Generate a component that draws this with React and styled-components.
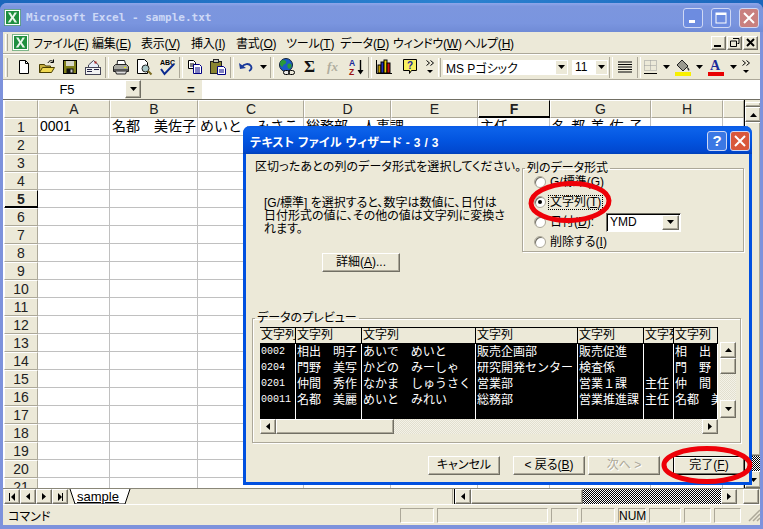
import React from 'react';
import styled, { createGlobalStyle, css } from 'styled-components';

const JP = `"Liberation Sans", "Noto Sans CJK JP", sans-serif`;
const face = '#ece9d8';
const shade = '#aca899';

const Global = createGlobalStyle`
  html, body { margin: 0; padding: 0; background: #1e6cc0; }
  * { box-sizing: border-box; }
  body { font-family: ${JP}; font-size: 12px; color: #000; font-feature-settings: "palt"; }
`;

const raised = css`
  background: ${face};
  border: 1px solid;
  border-color: #fff #716f64 #716f64 #fff;
  box-shadow: inset -1px -1px 0 ${shade};
`;
const etched = css`
  border: 1px solid ${shade};
  box-shadow: 1px 1px 0 #fff, inset 1px 1px 0 #fff;
`;

const Page = styled.div`
  position: relative;
  width: 763px;
  height: 529px;
  overflow: hidden;
  padding-top: 3px;
  background: linear-gradient(90deg, #1a66bc, #2b82d0 60%, #1a66bc);
`;
const Window = styled.div`
  width: 763px;
  height: 526px;
  display: flex;
  flex-direction: column;
  border-radius: 7px 7px 0 0;
  background: #7d92dc;
  padding: 0 3px 4px;
`;
const TitleBar = styled.div`
  height: 29px;
  margin: 0 -3px;
  padding: 0 4px 0 4px;
  display: flex;
  align-items: center;
  gap: 5px;
  border-radius: 7px 7px 0 0;
  background: linear-gradient(180deg, #8ea6ea 0, #7c96de 12%, #7a95df 70%, #708bd6 100%);
`;
const TitleText = styled.div`
  flex: 1;
  font: bold 11px "DejaVu Sans Mono", "Liberation Mono", monospace;
  color: #cdd8f6;
  letter-spacing: 0;
`;
const CaptionButton = styled.div`
  width: 20px;
  height: 20px;
  margin-left: ${p => p.$gap || 3}px;
  border: 1px solid #cfd8f4;
  border-radius: 3px;
  display: flex;
  align-items: center;
  justify-content: center;
  background: ${p => p.$tone === 'close' ? '#c9807f' : p.$tone === 'help' ? '#3b78e4' : '#6d8ce0'};
  &.active { background: #d9583a; }
`;
const MenuBar = styled.div`
  height: 22px;
  background: ${face};
  display: flex;
  align-items: center;
  padding-left: 2px;
  border-bottom: 1px solid ${shade};
`;
const Grip = styled.div`
  width: 3px;
  height: ${p => p.$h || 17}px;
  margin-right: ${p => p.$mr || 4}px;
  border-left: 1px solid #fff;
  border-right: 1px solid ${shade};
  background: ${face};
`;
const MenuIcon = styled.div`
  width: 17px;
  height: 17px;
  margin-right: 3px;
`;
const MenuItem = styled.div`
  width: ${p => p.$w}px;
  flex: none;
  font-size: 12px;
  white-space: nowrap;
  padding-left: 1px;
  letter-spacing: -0.2px;
`;
const MdiGroup = styled.div`
  margin-left: auto;
  display: flex;
  gap: 1px;
  padding-right: 2px;
`;
const MdiButton = styled.div`
  ${raised};
  width: 15px;
  height: 14px;
  display: flex;
  align-items: center;
  justify-content: center;
`;
const ToolBar = styled.div`
  height: 26px;
  background: ${face};
  display: flex;
  align-items: center;
  padding-left: 2px;
  border-bottom: 1px solid ${shade};
  border-top: 1px solid #fff;
`;
const Tool = styled.div`
  width: ${p => p.$w || 23}px;
  margin-left: ${p => p.$ml || 0}px;
  height: 22px;
  flex: none;
  display: flex;
  align-items: center;
  justify-content: center;
`;
const Sep = styled.div`
  width: ${p => p.$w || 5}px;
  flex: none;
  height: 21px;
  display: flex;
  justify-content: center;
  &::before { content: ''; width: 2px; border-left: 1px solid ${shade}; border-right: 1px solid #fff; }
`;
const Combo = styled.div`
  width: ${p => p.$w}px;
  margin-left: ${p => p.$ml || 0}px;
  height: 15px;
  flex: none;
  background: #fff;
  display: flex;
  align-items: center;
  padding-left: 3px;
  font-size: 12px;
  position: relative;
  white-space: nowrap;
`;
const ComboText = styled.span`
  flex: 1;
`;
const ComboArrow = styled.span`
  width: 11px;
  height: 13px;
  margin-right: 1px;
  background: ${face};
  display: flex;
  align-items: center;
  justify-content: center;
`;
const FormulaBar = styled.div`
  height: 20px;
  display: flex;
  background: ${face};
  border-bottom: 1px solid #716f64;
`;
const NameBox = styled.div`
  width: 122px;
  background: #fff;
  text-align: center;
  font-size: 13px;
  line-height: 19px;
  padding-left: 6px;
`;
const NameDrop = styled.div`
  ${raised};
  width: 16px;
  height: 18px;
  margin-top: 0;
  display: flex;
  align-items: center;
  justify-content: center;
`;
const EqualCell = styled.div`
  width: 59px;
  margin-left: 2px;
  padding-left: 44px;
  font: bold 13px/19px "Liberation Sans", sans-serif;
`;
const FormulaInput = styled.div`
  flex: 1;
  background: #fff;
`;
const Sheet = styled.div`
  height: 388px;
  display: flex;
  background: #fff;
  overflow: hidden;
`;
const Grid = styled.div`
  flex: none;
  width: 741px;
  padding-left: 1px;
  background: #fff;
  display: grid;
  grid-template-columns: 34px 72px 88px 106px 87px 87px 72px 101px 72px 1fr;
  grid-auto-rows: 18px;
`;
const HeadCell = styled.div`
  background: ${face};
  border: 1px solid;
  border-color: #fff ${p => p.$active ? '#000' : shade} ${p => p.$active ? '#000' : shade} #fff;
  ${p => p.$active && css`border-right-width: 1px; box-shadow: inset 0 -1px 0 #000;`}
  font-size: 14px;
  font-weight: ${p => p.$active ? 'bold' : 'normal'};
  line-height: 16px;
  text-align: center;
  color: #222;
`;
const Cell = styled.div`
  border-right: 1px solid #c0c0c0;
  border-bottom: 1px solid #c0c0c0;
  padding: 0 2px;
  font-size: ${p => p.$fs || 14}px;
  line-height: 17px;
  letter-spacing: ${p => p.$ls || 0}px;
  font-feature-settings: normal;
  white-space: nowrap;
`;
const VScroll = styled.div`
  flex: 1;
  padding-top: 2px;
  background: ${face};
  border-left: 1px solid #000;
  display: flex;
  flex-direction: column;
`;
const SplitBox = styled.div`
  height: 5px;
  ${raised};
`;
const ScrollBtn = styled.div`
  ${raised};
  flex: none;
  width: ${p => p.$w || 16}px;
  height: ${p => p.$h || 16}px;
  display: flex;
  align-items: center;
  justify-content: center;
`;
const ScrollThumb = styled.div`
  ${raised};
  flex: ${p => p.$grow || 'none'};
  width: ${p => p.$w ? p.$w + 'px' : 'auto'};
  height: ${p => p.$h ? p.$h + 'px' : 'auto'};
`;
const Checker = styled.div`
  flex: ${p => p.$grow || 1};
  height: ${p => p.$h ? p.$h + 'px' : 'auto'};
  background: repeating-conic-gradient(${p => p.$light ? '#f4f2e8' : '#000'} 0 25%, ${p => p.$light ? '#e2dfcf' : '#fff'} 0 50%) 0 0 / 2px 2px;
`;
const TabBar = styled.div`
  height: 17px;
  display: flex;
  align-items: center;
  background: ${face};
  border-top: 1px solid #8a8778;
  border-bottom: 1px solid #fff;
  padding-left: 1px;
`;
const TabNav = styled.div`
  width: 16px;
  height: 15px;
  ${raised};
  display: flex;
  align-items: center;
  justify-content: center;
`;
const Tab = styled.div`
  position: relative;
  width: 62px;
  height: 15px;
  margin-left: 1px;
  font-size: 13px;
  line-height: 15px;
  padding-left: 8px;
  text-decoration: underline;
  flex: none;
`;
const TabShape = styled.svg`
  position: absolute;
  left: 0;
  top: 0;
`;
const TabFill = styled.div`
  flex: none;
  width: 321px;
`;
const Splitter = styled.div`
  flex: none;
  width: 3px;
  height: 15px;
  border-left: 1px solid ${shade};
  border-right: 1px solid #000;
`;
const TabCorner = styled.div`
  flex: none;
  ${raised};
  width: 16px;
  height: 15px;
  margin-left: 6px;
`;
const StatusBar = styled.div`
  height: 20px;
  background: ${face};
  display: flex;
  align-items: center;
  gap: 3px;
  position: relative;
`;
const StatusLabel = styled.div`
  width: 386px;
  flex: none;
  padding-left: 5px;
  font-size: 12px;
`;
const Pane = styled.div`
  width: ${p => p.$w}px;
  flex: none;
  height: 15px;
  margin-left: ${p => p.$ml || 0}px;
  ${etched};
  box-shadow: none;
  border-color: ${shade} #fff #fff ${shade};
  outline: 0;
  text-align: center;
  font-size: 12px;
  line-height: 14px;
`;
const Resize = styled.svg`
  flex: none;
  margin-left: 3px;
`;

/* dialog */
const Dialog = styled.div`
  position: absolute;
  left: 243px;
  top: 126px;
  width: 509px;
  height: 359px;
  border: 3px solid #0050e0;
  border-top: 0;
  border-radius: 7px 7px 0 0;
  background: ${face};
  display: flex;
  flex-direction: column;
`;
const DialogTitle = styled.div`
  height: 28px;
  margin: 0 -3px;
  padding: 2px 2px 0 7px;
  display: flex;
  align-items: center;
  border-radius: 7px 7px 0 0;
  background: linear-gradient(180deg, #0a5ae6 0, #0c62ea 10%, #0355e0 50%, #0148d0 90%, #0040b8 100%);
`;
const DialogTitleText = styled.div`
  flex: 1;
  font-weight: bold;
  font-size: 12px;
  color: #fff;
  letter-spacing: 0.3px;
  white-space: nowrap;
`;
const TopRow = styled.div`
  display: flex;
  height: 98px;
  margin-top: 7px;
  padding: 0 5px 0 9px;
  justify-content: space-between;
`;
const LeftColumn = styled.div`
  width: 260px;
  display: flex;
  flex-direction: column;
  align-items: flex-start;
`;
const Lead = styled.div`
  font-size: 12px;
  line-height: 13px;
  white-space: nowrap;
  letter-spacing: 0.1px;
`;
const Para = styled.div`
  width: 242px;
  margin: 23px 0 0 9px;
  font-size: 12px;
  line-height: 13px;
`;
const Button = styled.div`
  ${raised};
  width: ${p => p.$w || 72}px;
  height: ${p => p.$h || 19}px;
  flex: none;
  margin: ${p => p.$m || 0};
  text-align: center;
  font-size: 12px;
  line-height: 17px;
  color: ${p => p.$disabled ? shade : '#000'};
  text-shadow: ${p => p.$disabled ? '1px 1px 0 #fff' : 'none'};
  ${p => p.$def && css`border: 1px solid #000; box-shadow: inset -1px -1px 0 #716f64, inset 1px 1px 0 #fff;`}
`;
const Group = styled.fieldset`
  margin: ${p => p.$m || 0};
  padding: ${p => p.$p || 0};
  width: ${p => p.$w}px;
  height: ${p => p.$h}px;
  flex: none;
  min-width: 0;
  ${etched};
`;
const GroupLegend = styled.legend`
  margin-left: 2px;
  padding: 0 2px;
  font-size: 12px;
  line-height: 14px;
`;
const RadioList = styled.div`
  display: flex;
  flex-direction: column;
  gap: 6px;
  padding-left: 11px;
`;
const RadioRow = styled.div`
  height: 14px;
  display: flex;
  align-items: center;
  gap: 3px;
  font-size: 12px;
  white-space: nowrap;
`;
const RadioDot = styled.span`
  width: 12px;
  height: 12px;
  flex: none;
  border-radius: 50%;
  background: #fff;
  border: 1px solid ${shade};
  box-shadow: inset 1px 1px 0 #716f64;
  display: flex;
  align-items: center;
  justify-content: center;
  &::after { content: ''; width: 4px; height: 4px; border-radius: 50%; background: ${p => p.$on ? '#000' : 'transparent'}; }
`;
const RadioLabel = styled.span`
  outline: ${p => p.$focus ? '1px dotted #000' : '0'};
  padding: 0 1px;
  line-height: 13px;
`;
const DateSelect = styled.div`
  width: 75px;
  height: 19px;
  margin-left: 8px;
  background: #fff;
  border: 1px solid;
  border-color: #716f64 #fff #fff #716f64;
  box-shadow: inset 1px 1px 0 #000;
  display: flex;
  align-items: center;
  padding: 0 1px 0 3px;
  font-size: 12px;
`;
const DateArrow = styled.span`
  ${raised};
  width: 17px;
  height: 15px;
  display: flex;
  align-items: center;
  justify-content: center;
`;
const PreviewRow = styled.div`
  display: flex;
  padding: 2px 0 0 7px;
`;
const PreviewPane = styled.div`
  width: 458px;
  flex: none;
`;
const PreviewTable = styled.div`
  display: grid;
  grid-template-columns: 36px 66px 114px 102px 66px 30px 44px;
  background: #000;
  height: 92px;
  border-top: 1px solid #000;
`;
const PreviewCol = styled.div`
  display: flex;
  flex-direction: column;
  overflow: hidden;
`;
const PreviewHead = styled.div`
  height: 16px;
  flex: none;
  background: ${face};
  border-right: 1px solid #000;
  border-bottom: 1px solid #000;
  font-size: 12px;
  line-height: 15px;
  font-feature-settings: normal;
  white-space: nowrap;
  padding-left: 1px;
`;
const PreviewBody = styled.div`
  flex: 1;
  background: #000;
  color: #fff;
  border-right: 1px solid #fff;
  padding-left: 1px;
  white-space: nowrap;
  font-feature-settings: normal;
`;
const PreviewLine = styled.div`
  height: 16px;
  font-size: ${p => p.$num ? 10 : 12}px;
  line-height: 16px;
  font-family: ${p => p.$num ? '"Liberation Mono", monospace' : JP};
`;
const HScroll = styled.div`
  display: flex;
  height: 15px;
  background: ${face};
`;
const SideScroll = styled.div`
  width: 16px;
  height: 76px;
  margin: 15px 0 0 2px;
  flex: none;
  display: flex;
  flex-direction: column;
`;
const DialogActions = styled.div`
  display: flex;
  justify-content: flex-end;
  padding-right: 4px;
  margin-top: 13px;
`;
const Annotation = styled.svg`
  position: absolute;
  left: 0;
  top: 0;
  pointer-events: none;
`;

/* icons */
const Ar = ({ d = 'down', s = '#000' }) => {
  const pts = { down: '0,0 7,0 3.5,4', up: '0,4 7,4 3.5,0', left: '4,0 4,7 0,3.5', right: '0,0 0,7 4,3.5' }[d];
  const v = d === 'down' || d === 'up' ? [7, 4] : [4, 7];
  return <svg width={v[0]} height={v[1]} viewBox={`0 0 ${v[0]} ${v[1]}`}><polygon points={pts} fill={s} /></svg>;
};
const Ico = ({ children }) => <svg width="18" height="18" viewBox="0 0 18 18">{children}</svg>;
const ExcelIcon = ({ size = 17 }) => (
  <svg width={size} height={size} viewBox="0 0 17 17">
    <rect x=".5" y=".5" width="16" height="16" fill="#fff" stroke="#0a7a2a" strokeDasharray="1 1" />
    <rect x="2" y="2" width="13" height="13" fill="#1e8f3e" />
    <path d="M4 3.5h2.5L8.5 7l2-3.500H13L9.800 8.500 13.200 13.500H10.600L8.500 10l-2.200 3.500H3.800L7.200 8.500z" fill="#e8f5ea" />
  </svg>
);
const NewIcon = () => <Ico><path d="M4.500 2.500h6l3 3v10h-9z" fill="#fff" stroke="#000" /><path d="M10.500 2.500v3h3" fill="none" stroke="#000" /></Ico>;
const OpenIcon = () => <Ico><path d="M1.500 6.500h5l1 1.500h5v6.500h-11z" fill="#c8b040" stroke="#4a3f00" /><path d="M1.500 14.500l3-5h12l-3 5z" fill="#f0d850" stroke="#4a3f00" /><path d="M10 5c1-2.500 3.500-3 5-1.500" fill="none" stroke="#000" /><path d="M15.500 1.500v3h-3" fill="none" stroke="#000" /></Ico>;
const SaveIcon = () => <Ico><rect x="2.500" y="2.500" width="13" height="13" fill="#80801a" stroke="#000" /><rect x="5" y="3" width="8" height="5" fill="#d8d8c8" /><rect x="5.500" y="10.500" width="7" height="5" fill="#111" /><rect x="9.500" y="11.500" width="2" height="3" fill="#c8c8c8" /></Ico>;
const MailIcon = () => <Ico><path d="M4.500 7L9.500 2.500 14.500 7v3h-10z" fill="#e8eef8" stroke="#445" /><rect x="10.500" y="3.500" width="2" height="2" fill="#b02020" /><rect x="1.500" y="9.500" width="15" height="7" fill="#f2f2f2" stroke="#445" /><path d="M3 11.500h5M3 13.500h5M10 11.500h5" stroke="#224" /></Ico>;
const PrintIcon = () => <Ico><path d="M5.500 2.500h7l1.500 5h-9z" fill="#fff" stroke="#222" /><path d="M1.500 8.500l2-2h11l2 2v5h-15z" fill="#a8a8a0" stroke="#222" /><rect x="2" y="11" width="14" height="2" fill="#555" /><rect x="12" y="9" width="2" height="1" fill="#e8e800" /><path d="M3.500 13.500l1 2.500h9l1-2.500" fill="#ddd" stroke="#222" /></Ico>;
const PreviewIcon = () => <Ico><path d="M2.500 1.500h7l3 3v11h-10z" fill="#fff" stroke="#000" /><circle cx="10.500" cy="10.500" r="3.500" fill="#a8c8c8" stroke="#222" /><path d="M13 13l3.500 3.500" stroke="#7a6a20" strokeWidth="2" /></Ico>;
const SpellIcon = () => <Ico><text x="2" y="7" fontSize="7" fontFamily="Liberation Sans" fontWeight="bold" fill="#000">ABC</text><path d="M3 11l3.500 5L16 6" fill="none" stroke="#0a2a90" strokeWidth="2" /></Ico>;
const CopyIcon = () => <Ico><path d="M2.500 2.500h5l2 2v6h-7z" fill="#fff" stroke="#000" /><path d="M7.500 6.500h6l2 2v7h-8z" fill="#fff" stroke="#000084" /><path d="M9 10h5M9 12h5M9 14h5" stroke="#000084" /><path d="M4 6h4M4 8h3" stroke="#000" /></Ico>;
const PasteIcon = () => <Ico><rect x="1.500" y="3.500" width="11" height="12" fill="#8a8530" stroke="#222" /><rect x="4.500" y="1.500" width="5" height="3" fill="#c8c8b8" stroke="#222" /><path d="M8.500 8.500h6l2 2v6h-8z" fill="#fff" stroke="#000084" /><path d="M10 12h5M10 14h5" stroke="#000084" /></Ico>;
const UndoIcon = () => <Ico><path d="M5 9c2-3.500 7-4 9 -1 1 2 0 4-2 5" fill="none" stroke="#1a3a9a" strokeWidth="1.800" /><path d="M2 5l1 6 6-1z" fill="#1a3a9a" /></Ico>;
const GlobeIcon = () => <Ico><circle cx="8" cy="7" r="6.500" fill="#1a5ac8" stroke="#123" /><path d="M5 2c2 0 4 1 3 3s-3 1-3 3-3 0-3-2 1-4 3-4zM10 6c2-1 4 0 3.500 2S11 12 10 10s-1-3 0-4z" fill="#2a9a3a" /><rect x="5.500" y="12.500" width="6" height="4" rx="2" fill="#e8e8e8" stroke="#000" /><rect x="10.500" y="12.500" width="6" height="4" rx="2" fill="none" stroke="#000" /></Ico>;
const GlyphTool = styled.span`
  font: ${p => p.$f};
  color: ${p => p.$c};
  line-height: 18px;
`;
const SortIcon = () => <Ico><text x="2" y="8" fontSize="8.500" fontWeight="bold" fontFamily="Liberation Sans" fill="#1a2a9a">A</text><text x="2" y="16.500" fontSize="8.500" fontWeight="bold" fontFamily="Liberation Sans" fill="#9a1010">Z</text><path d="M13.500 2v11" stroke="#000" strokeWidth="1.400" /><path d="M10.500 12h6l-3 4.500z" fill="#000" /></Ico>;
const ChartIcon = () => <Ico><path d="M1.500 2v13.500H17" fill="none" stroke="#000" /><rect x="3" y="7" width="3" height="8" fill="#c8a000" stroke="#000" /><rect x="6" y="4" width="3" height="11" fill="#2030c0" stroke="#000" /><rect x="9" y="2" width="3" height="13" fill="#e8d000" stroke="#000" /><rect x="12" y="5" width="3" height="10" fill="#c81010" stroke="#000" /></Ico>;
const HelpIcon = () => <Ico><path d="M2.500 1.500h13v11h-5l-2 3v-3h-6z" fill="#f8f060" stroke="#000" /><text x="6" y="11" fontSize="10" fontWeight="bold" fontFamily="Liberation Sans" fill="#1a2a9a">?</text></Ico>;
const Chevrons = () => <svg width="8" height="14" viewBox="0 0 8 14"><path d="M0.500 0.500l3 2.500-3 2.500M4.500 0.500l3 2.500-3 2.500" fill="none" stroke="#000" /><polygon points="1,10 7,10 4,13" /></svg>;
const AlignIcon = () => <Ico><path d="M2 4h14M2 6.500h14M2 9h14M2 11.500h14M2 14h14" stroke="#000" /></Ico>;
const BorderIcon = () => <Ico><rect x="2.500" y="2.500" width="12" height="10" fill="none" stroke="#999" strokeDasharray="1 1" /><path d="M2.500 7.500h12M8.500 2.500v10" stroke="#999" strokeDasharray="1 1" /><path d="M2 15.500h13" stroke="#000" /></Ico>;
const FillIcon = () => <Ico><path d="M8 2l6 6-5 5-6-6z" fill="#9a9a90" stroke="#222" /><path d="M13 9c2 1 3 2 2 4-1-1-2-2-2-4z" fill="#333" /><rect x="1" y="14" width="16" height="4" fill="#f8f000" /></Ico>;
const ColorIcon = () => <Ico><text x="3" y="12" fontSize="14" fontWeight="bold" fontFamily="Liberation Serif" fill="#1a2a9a">A</text><rect x="1" y="14" width="16" height="4" fill="#e80000" /></Ico>;

const M = ({ label, k, w }) => <MenuItem $w={w}>{label}(<u>{k}</u>)</MenuItem>;
const menus = [['ファイル', 'F', 59], ['編集', 'E', 49], ['表示', 'V', 50], ['挿入', 'I', 45], ['書式', 'O', 50], ['ツール', 'T', 54], ['データ', 'D', 53], ['ウィンドウ', 'W', 71], ['ヘルプ', 'H', 50]];
const columns = ['A', 'B', 'C', 'D', 'E', 'F', 'G', 'H', ''];
const firstRow = [['0001'], ['名都　美佐子'], ['めいと　みさこ'], ['総務部　人事課'], [''], ['主任'], ['名都美佐子', 14, 5.200], [''], ['']];
const preview = [
  { w: '文字列', num: true, rows: ['0002', '0204', '0201', '00011'] },
  { w: '文字列', rows: ['相出　明子', '門野　美写', '仲間　秀作', '名都　美麗'] },
  { w: '文字列', rows: ['あいで　めいと', 'かどの　みーしゃ', 'なかま　しゅうさく', 'めいと　みれい'] },
  { w: '文字列', rows: ['販売企画部', '研究開発センター', '営業部', '総務部'] },
  { w: '文字列', rows: ['販売促進', '検査係', '営業１課', '営業推進課'] },
  { w: '文字列', rows: ['', '', '主任', '主任'] },
  { w: '文字列', rows: ['相　出', '門　野', '仲　間', '名都　美佐'] },
];

export default function App() {
  return (
    <Page>
      <Global />
      <Window>
        <TitleBar>
          <ExcelIcon />
          <TitleText>Microsoft Excel - sample.txt</TitleText>
          <CaptionButton><svg width="10" height="10"><rect x="1" y="7" width="6" height="3" fill="#fff" /></svg></CaptionButton>
          <CaptionButton><svg width="12" height="12"><rect x="1" y="1" width="10" height="10" fill="none" stroke="#fff" /><rect x="1" y="1" width="10" height="2" fill="#fff" /></svg></CaptionButton>
          <CaptionButton $tone="close"><svg width="12" height="12"><path d="M1 1l10 10M11 1L1 11" stroke="#fff" strokeWidth="2" /></svg></CaptionButton>
        </TitleBar>
        <MenuBar>
          <Grip />
          <MenuIcon><ExcelIcon /></MenuIcon>
          {menus.map(([l, k, w]) => <M key={k} label={l} k={k} w={w} />)}
          <MdiGroup>
            <MdiButton><svg width="9" height="9"><rect x="0" y="7" width="7" height="2" /></svg></MdiButton>
            <MdiButton><svg width="10" height="9"><path d="M3 .500h6v5H7.500M.500 3h6v5.500h-6z" fill="none" stroke="#000" /></svg></MdiButton>
            <MdiButton><svg width="10" height="9"><path d="M1 1l7 7M8 1L1 8" stroke="#000" strokeWidth="2" /></svg></MdiButton>
          </MdiGroup>
        </MenuBar>
        <ToolBar>
          <Grip $h={19} $mr={0} />
          <Tool><NewIcon /></Tool>
          <Tool><OpenIcon /></Tool>
          <Tool><SaveIcon /></Tool>
          <Tool><MailIcon /></Tool>
          <Sep />
          <Tool><PrintIcon /></Tool>
          <Tool><PreviewIcon /></Tool>
          <Tool><SpellIcon /></Tool>
          <Sep />
          <Tool><CopyIcon /></Tool>
          <Tool><PasteIcon /></Tool>
          <Sep />
          <Tool><UndoIcon /></Tool>
          <Tool $w={12}><Ar /></Tool>
          <Sep $w={6} />
          <Tool><GlobeIcon /></Tool>
          <Tool><GlyphTool $f="bold 17px 'Liberation Serif', serif" $c="#111">Σ</GlyphTool></Tool>
          <Tool><GlyphTool $f="italic bold 13px 'Liberation Serif', serif" $c="#b0ae9f">fx</GlyphTool></Tool>
          <Tool><SortIcon /></Tool>
          <Sep />
          <Tool><ChartIcon /></Tool>
          <Tool $ml={3}><HelpIcon /></Tool>
          <Tool $w={17}><Chevrons /></Tool>
          <Grip $h={19} $mr={1} />
          <Combo $w={125} $ml={1}><ComboText>MS Pゴシック</ComboText><ComboArrow><Ar /></ComboArrow></Combo>
          <Combo $w={36} $ml={4}><ComboText>11</ComboText><ComboArrow><Ar /></ComboArrow></Combo>
          <Sep />
          <Tool><AlignIcon /></Tool>
          <Sep />
          <Tool $w={20}><BorderIcon /></Tool>
          <Tool $w={11}><Ar /></Tool>
          <Tool $w={22}><FillIcon /></Tool>
          <Tool $w={11}><Ar /></Tool>
          <Tool $w={22}><ColorIcon /></Tool>
          <Tool $w={12}><Ar /></Tool>
          <Tool $w={14}><Chevrons /></Tool>
        </ToolBar>
        <FormulaBar>
          <NameBox>F5</NameBox>
          <NameDrop><Ar /></NameDrop>
          <EqualCell>=</EqualCell>
          <FormulaInput />
        </FormulaBar>
        <Sheet>
          <Grid>
            <HeadCell />
            {columns.map((c, i) => <HeadCell key={i} $active={c === 'F'}>{c}</HeadCell>)}
            {Array.from({ length: 21 }, (_, r) => (
              <React.Fragment key={r}>
                <HeadCell $active={r === 4}>{r + 1}</HeadCell>
                {columns.map((_c, i) => {
                  const v = r === 0 ? firstRow[i] : [''];
                  return <Cell key={i} $fs={v[1]} $ls={v[2]}>{v[0]}</Cell>;
                })}
              </React.Fragment>
            ))}
          </Grid>
          <VScroll>
            <SplitBox />
            <ScrollBtn $w={16} $h={15}><Ar d="up" /></ScrollBtn>
            <ScrollThumb $grow="1" />
            <Checker $h={15} $grow="none" />
            <ScrollBtn $w={16} $h={17}><Ar /></ScrollBtn>
          </VScroll>
        </Sheet>
        <TabBar>
          <TabNav><svg width="7" height="8"><rect width="1" height="8" /><polygon points="6,0 6,8 2,4" /></svg></TabNav>
          <TabNav><Ar d="left" /></TabNav>
          <TabNav><Ar d="right" /></TabNav>
          <TabNav><svg width="7" height="8"><rect x="5" width="1" height="8" /><polygon points="1,0 1,8 5,4" /></svg></TabNav>
          <Tab>
            <TabShape width="62" height="15"><path d="M1 0l5 15h50l5-15" fill="#fff" stroke="#000" /></TabShape>
            <span style={{ position: 'relative' }}>sample</span>
          </Tab>
          <TabFill />
          <Splitter />
          <ScrollBtn $w={16} $h={15}><Ar d="left" /></ScrollBtn>
          <ScrollThumb $w={112} $h={15} />
          <Checker $h={15} $grow="0 0 138px" />
          <ScrollBtn $w={16} $h={15}><Ar d="right" /></ScrollBtn>
          <TabCorner />
        </TabBar>
        <StatusBar>
          <StatusLabel>コマンド</StatusLabel>
          <Pane $w={34} $ml={8} />
          <Pane $w={111} />
          <Pane $w={27} />
          <Pane $w={34} />
          <Pane $w={28}>NUM</Pane>
          <Pane $w={32} />
          <Pane $w={27} />
          <Pane $w={27} />
          <Resize width="14" height="14" viewBox="0 0 14 14"><path d="M13 2L2 13M13 6l-7 7M13 10l-3 3" stroke="#aca899" strokeWidth="1.500" /></Resize>
        </StatusBar>
      </Window>

      <Dialog>
        <DialogTitle>
          <DialogTitleText>テキスト ファイル ウィザード - 3 / 3</DialogTitleText>
          <CaptionButton $tone="help"><GlyphTool $f="bold 15px 'Liberation Sans', sans-serif" $c="#fff">?</GlyphTool></CaptionButton>
          <CaptionButton className="active"><svg width="12" height="12"><path d="M1 1l10 10M11 1L1 11" stroke="#fff" strokeWidth="2" /></svg></CaptionButton>
        </DialogTitle>
        <TopRow>
          <LeftColumn>
            <Lead>区切ったあとの列のデータ形式を選択してください。</Lead>
            <Para>[G/標準] を選択すると、数字は数値に、日付は日付形式の値に、その他の値は文字列に変換されます。</Para>
            <Button $w={78} $m="17px 0 0 67px">詳細(<u>A</u>)...</Button>
          </LeftColumn>
          <Group $w={222} $h={91}>
            <GroupLegend>列のデータ形式</GroupLegend>
            <RadioList>
              <RadioRow><RadioDot /><RadioLabel>G/標準(<u>G</u>)</RadioLabel></RadioRow>
              <RadioRow><RadioDot $on /><RadioLabel $focus>文字列(<u>T</u>)</RadioLabel></RadioRow>
              <RadioRow><RadioDot /><RadioLabel>日付(<u>D</u>):</RadioLabel><DateSelect><ComboText>YMD</ComboText><DateArrow><Ar /></DateArrow></DateSelect></RadioRow>
              <RadioRow><RadioDot /><RadioLabel>削除する(<u>I</u>)</RadioLabel></RadioRow>
            </RadioList>
          </Group>
        </TopRow>
        <Group $w={489} $h={132} $m="52px 0 0 6px">
          <GroupLegend>データのプレビュー</GroupLegend>
          <PreviewRow>
            <PreviewPane>
              <PreviewTable>
                {preview.map((c, i) => (
                  <PreviewCol key={i}>
                    <PreviewHead>{c.w}</PreviewHead>
                    <PreviewBody>
                      {c.rows.map((t, j) => <PreviewLine key={j} $num={c.num}>{t}</PreviewLine>)}
                    </PreviewBody>
                  </PreviewCol>
                ))}
              </PreviewTable>
              <HScroll>
                <ScrollBtn $h={15}><Ar d="left" /></ScrollBtn>
                <ScrollThumb $w={118} $h={15} />
                <Checker $light $h={15} />
                <ScrollBtn $h={15}><Ar d="right" /></ScrollBtn>
              </HScroll>
            </PreviewPane>
            <SideScroll>
              <ScrollBtn><Ar d="up" /></ScrollBtn>
              <ScrollThumb $w={16} $h={16} />
              <Checker $light />
              <ScrollBtn $h={18}><Ar /></ScrollBtn>
            </SideScroll>
          </PreviewRow>
        </Group>
        <DialogActions>
          <Button>キャンセル</Button>
          <Button $m="0 0 0 13px">&lt; 戻る(<u>B</u>)</Button>
          <Button $m="0 0 0 3px" $disabled>次へ &gt;</Button>
          <Button $m="0 0 0 13px" $def>完了(<u>F</u>)</Button>
        </DialogActions>
      </Dialog>

      <Annotation width="763" height="529" viewBox="0 0 763 529">
        <ellipse cx="570" cy="202" rx="39" ry="18.500" fill="none" stroke="#ee0008" strokeWidth="5" transform="rotate(-2 570 202)" />
        <ellipse cx="707" cy="465" rx="43" ry="16.500" fill="none" stroke="#ee0008" strokeWidth="5" />
      </Annotation>
    </Page>
  );
}
